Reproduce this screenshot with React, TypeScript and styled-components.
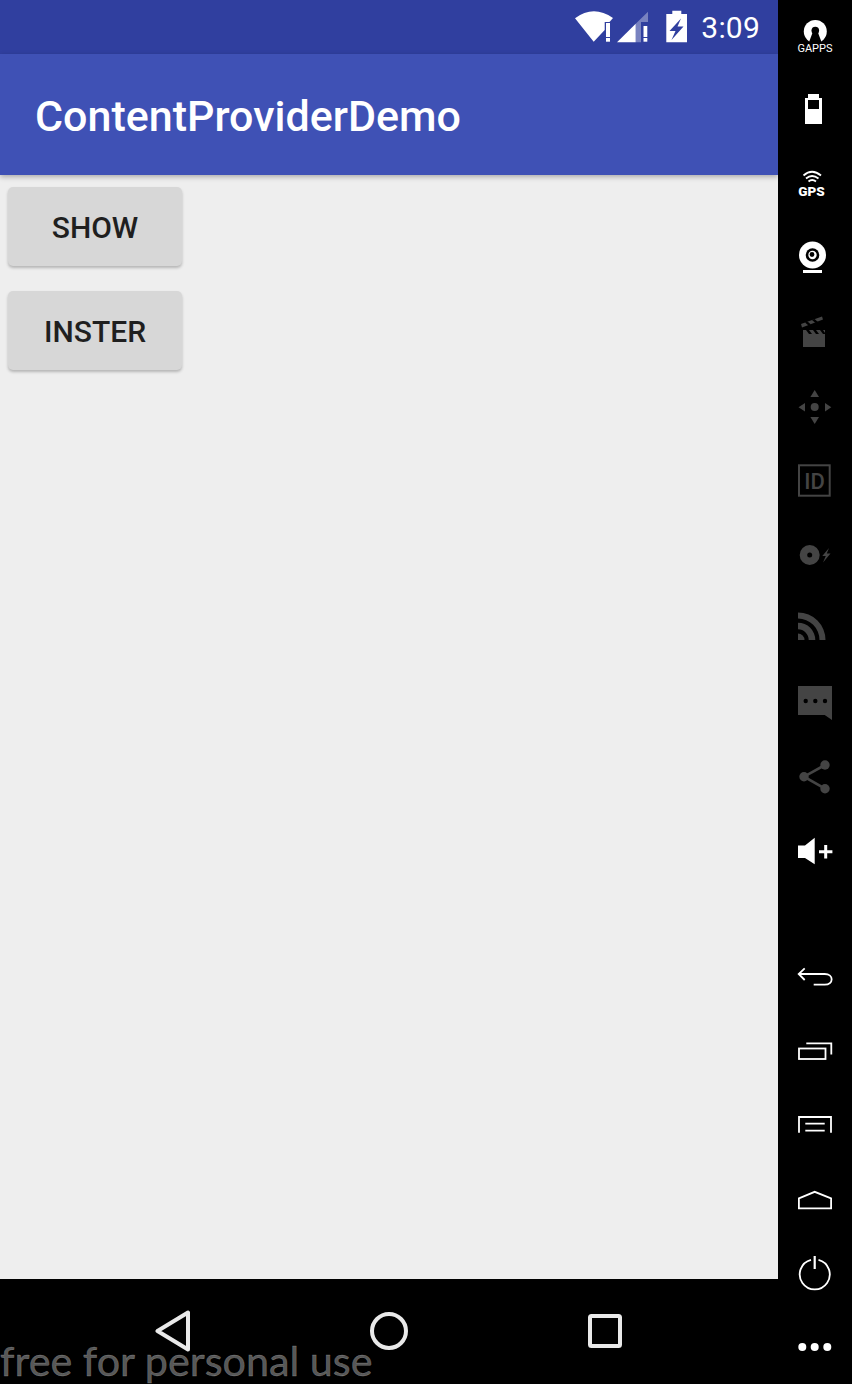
import React, { ReactNode } from 'react';
import styled, { createGlobalStyle } from 'styled-components';

const GlobalStyle = createGlobalStyle`
  html, body {
    margin: 0;
    padding: 0;
    background: #000;
  }
`;

const Screen = styled.div`
  position: relative;
  display: flex;
  width: 852px;
  height: 1384px;
  overflow: hidden;
  background: #000;
  font-family: Roboto, "Liberation Sans", sans-serif;
`;

const Device = styled.div`
  display: flex;
  flex-direction: column;
  width: 778px;
  height: 100%;
`;

const StatusBar = styled.div`
  display: flex;
  align-items: center;
  justify-content: flex-end;
  flex: 0 0 54px;
  padding-right: 18px;
  background: #303f9f;
  color: #fff;
`;

const StatusIcons = styled.svg`
  display: block;
  margin-right: 12px;
`;

const Clock = styled.span`
  padding-top: 1px;
  font-size: 30px;
  line-height: 53px;
  letter-spacing: 0.2px;
`;

const AppBar = styled.header`
  position: relative;
  z-index: 1;
  display: flex;
  align-items: center;
  flex: 0 0 121px;
  padding: 3px 0 0 35px;
  box-sizing: border-box;
  background: #3f51b5;
  box-shadow: 0 2px 5px rgba(0, 0, 0, 0.28);
`;

const Title = styled.h1`
  margin: 0;
  color: #fff;
  font-size: 43px;
  font-weight: 500;
`;

const Content = styled.main`
  display: flex;
  flex: 1;
  flex-direction: column;
  align-items: flex-start;
  gap: 25px;
  padding: 12px 8px;
  background: #eeeeee;
`;

const ActionButton = styled.button`
  width: 174px;
  height: 79px;
  padding: 2px 0 0;
  border: 0;
  border-radius: 5px;
  background: #d7d7d7;
  box-shadow: 0 2px 3px rgba(0, 0, 0, 0.24);
  color: #1f1f1f;
  font-family: inherit;
  font-size: 30px;
  font-weight: 500;
`;

const NavBar = styled.nav`
  display: grid;
  grid-template-columns: repeat(3, 216px);
  justify-items: center;
  align-items: center;
  flex: 0 0 105px;
  padding: 0 65px 2px;
  box-sizing: border-box;
  background: #000;
`;

const NavIcon = styled.svg`
  display: block;
  fill: none;
  stroke: #e9e9e9;
  stroke-width: 4;
  stroke-linejoin: round;
`;

const Rail = styled.aside`
  display: flex;
  flex-direction: column;
  justify-content: space-between;
  width: 74px;
  height: 100%;
`;

const RailGroup = styled.div`
  display: flex;
  flex-direction: column;
`;

const RailSvg = styled.svg<{ $tone: string }>`
  display: block;
  color: ${props => props.$tone};
  fill: currentColor;
`;

const RailLabel = styled.text<{ $bold?: boolean }>`
  fill: #fff;
  font-family: Roboto, "Liberation Sans", sans-serif;
  font-size: ${props => (props.$bold ? 13.5 : 11)}px;
  font-weight: ${props => (props.$bold ? 900 : 400)};
  text-anchor: middle;
`;

const IdLabel = styled.text`
  fill: #444;
  font-family: Roboto, "Liberation Sans", sans-serif;
  font-size: 22px;
  font-weight: 500;
  text-anchor: middle;
`;

const Watermark = styled.div`
  position: absolute;
  left: 0;
  bottom: 1px;
  color: rgba(255, 255, 255, 0.34);
  font-family: Lato, "Open Sans", sans-serif;
  font-size: 41.3px;
  line-height: 46px;
  white-space: nowrap;
  -webkit-text-stroke: 0.4px rgba(255, 255, 255, 0.34);
`;

const WHITE = '#ffffff';
const DIM = '#444444';

// top is the slot's y on the page, so the drawings below use page coordinates
const RailIcon: React.FC<{ top: number; tone?: string; children: ReactNode }> = ({ top, tone = WHITE, children }) => (
  <RailSvg $tone={tone} width={74} height={74} viewBox={`0 ${top} 74 74`}>
    {children}
  </RailSvg>
);

const Line = { fill: 'none', stroke: 'currentColor', strokeWidth: 1.8 };

const TopIcons = () => (
  <RailGroup>
    <RailIcon top={0}>
      <circle cx="37.3" cy="31.500" r="11.500" />
      <circle cx="37.3" cy="30.500" r="3.800" fill="#000" />
      <path d="M34.800 32 H39.800 L44 43.500 H30.500 Z" fill="#000" />
      <RailLabel x="37" y="52">GAPPS</RailLabel>
    </RailIcon>
    <RailIcon top={74}>
      <path d="M30 98 V94 H41 V98 H44 V124 H27 V98 Z" />
      <rect x="30" y="100" width="11" height="9" fill="#000" />
    </RailIcon>
    <RailIcon top={148}>
      <path d="M25.500 175.500 Q34 168 43 175.500 M28 178.500 Q34 173.500 40.500 178.500 M30.500 181.500 Q34 178.500 38 181.500" fill="none" stroke="currentColor" strokeWidth="1.800" />
      <RailLabel x="33.500" y="195.500" $bold>GPS</RailLabel>
    </RailIcon>
    <RailIcon top={222}>
      <circle cx="34.500" cy="255" r="13.500" />
      <circle cx="34.500" cy="255" r="6.800" fill="#000" />
      <circle cx="34.500" cy="255" r="4.200" />
      <circle cx="34" cy="254.500" r="2.400" fill="#000" />
      <rect x="25" y="270" width="19" height="3" />
    </RailIcon>
    <RailIcon top={296} tone={DIM}>
      <rect x="25" y="334" width="22" height="13" />
      <path d="M25 330 H47 V334 H25 Z" />
      <path d="M28 330 L31 334 H34 L31 330 Z M35 330 L38 334 H41 L38 330 Z M42 330 L45 334 H47 V333 L45 330 Z" fill="#000" />
      <path d="M23 324 L44 316.500 L45 319.500 L24 327.500 Z" />
      <path d="M27 322.500 L30.500 325.500 L33 324.500 L29.500 321.500 Z M34 320 L37.500 323 L40 322 L36.500 319 Z" fill="#000" />
    </RailIcon>
    <RailIcon top={370} tone={DIM}>
      <path d="M36.700 390 L41 397 H32.400 Z" />
      <circle cx="36.700" cy="407" r="4" />
      <path d="M20.500 407.300 L27 403 V411.500 Z" />
      <path d="M53.300 407.300 L47 403 V411.500 Z" />
      <path d="M32.400 417 H41 L36.700 424 Z" />
    </RailIcon>
    <RailIcon top={444} tone={DIM}>
      <rect x="21" y="465.300" width="30.700" height="30.400" fill="none" stroke="currentColor" strokeWidth="2" />
      <IdLabel x="36.500" y="488.500">ID</IdLabel>
    </RailIcon>
    <RailIcon top={518} tone={DIM}>
      <circle cx="31.700" cy="555" r="10" />
      <circle cx="31.700" cy="555" r="2.500" fill="#000" />
      <path d="M51 548 L44.300 556 H47.800 L45 562.500 L52.500 553.500 H48.800 Z" />
    </RailIcon>
    <RailIcon top={592} tone={DIM}>
      <path d="M20 612.500 A27.500 27.500 0 0 1 47.500 640 H41.500 A21.500 21.500 0 0 0 20 618.500 Z" />
      <path d="M20 622.700 A17.300 17.300 0 0 1 37.300 640 H30.700 A10.700 10.700 0 0 0 20 629.300 Z" />
      <path d="M20 633.500 A6.500 6.500 0 0 1 26.500 640 H20 Z" />
    </RailIcon>
    <RailIcon top={666} tone={DIM}>
      <path d="M20 686 H54 V720 L46.700 715 H20 Z" />
      <circle cx="27.700" cy="701" r="2.200" fill="#000" />
      <circle cx="37.300" cy="701" r="2.200" fill="#000" />
      <circle cx="47" cy="701" r="2.200" fill="#000" />
    </RailIcon>
    <RailIcon top={740} tone={DIM}>
      <path d="M47 765 L26 776.700 L47 788.700" fill="none" stroke="currentColor" strokeWidth="2.600" />
      <circle cx="26" cy="776.700" r="4.700" />
      <circle cx="47" cy="765" r="4.700" />
      <circle cx="47" cy="788.700" r="4.700" />
    </RailIcon>
    <RailIcon top={814}>
      <path d="M20 845.500 L27 845.500 L36.700 837.700 V864.300 L27 858 H20 Z" />
      <path d="M41 851.700 H54.400 M47.700 845 V858.400" fill="none" stroke="currentColor" strokeWidth="3" />
    </RailIcon>
  </RailGroup>
);

const BottomIcons = () => (
  <RailGroup>
    <RailIcon top={940}>
      <path d="M26.700 968.300 L20.700 974 L26.700 980 M20.700 974 H46.700 C56 974 56 984.700 46.700 984.700 H35.700" {...Line} />
    </RailIcon>
    <RailIcon top={1014}>
      <rect x="21" y="1048.500" width="26.500" height="10.500" {...Line} />
      <path d="M28.300 1043.300 H53.300 V1054.500" {...Line} />
    </RailIcon>
    <RailIcon top={1088}>
      <path d="M21 1132.700 V1117 H53 V1132.700" {...Line} />
      <path d="M27.300 1123.700 H46.700 M27.300 1130.700 H46.700" {...Line} />
    </RailIcon>
    <RailIcon top={1162}>
      <path d="M20.900 1208.300 H53.100 V1198.300 L36.700 1191.800 L20.900 1198.300 Z" {...Line} />
    </RailIcon>
    <RailIcon top={1236}>
      <path d="M33 1259.800 A15 15 0 1 0 40.500 1259.800" {...Line} />
      <path d="M36.700 1256 V1269" {...Line} strokeWidth="2.200" />
    </RailIcon>
    <RailIcon top={1310}>
      <circle cx="24.300" cy="1347" r="4" />
      <circle cx="36.700" cy="1347" r="4" />
      <circle cx="49.300" cy="1347" r="4" />
    </RailIcon>
  </RailGroup>
);

const App: React.FC = () => (
  <>
    <GlobalStyle />
    <Screen>
      <Device>
        <StatusBar>
          <StatusIcons width={114} height={54} viewBox="574 0 114 54" fill="#fff">
            <path d="M574 18.300 Q592.500 4.500 612 18 L608.500 22 H603.700 V30 L592.700 41.700 Z" />
            <rect x="605" y="23" width="4" height="14" />
            <rect x="605" y="38" width="4" height="3.700" />
            <path d="M616 42.300 L634.700 23.700 V42.300 Z" />
            <path d="M634.700 42.300 V23.700 L647 11.700 V22 H640 V42.300 Z" opacity="0.35" />
            <rect x="642.500" y="26" width="3.800" height="11" />
            <rect x="642.500" y="38" width="3.800" height="3.700" />
            <path d="M671.300 10.700 H680.300 V14 H686 V42.300 H665.300 V14 H671.300 Z" />
            <path d="M680 18.500 L668.500 31 H674.500 L670.500 40 L682.500 26.500 H676.500 Z" fill="#303f9f" />
          </StatusIcons>
          <Clock>3:09</Clock>
        </StatusBar>
        <AppBar>
          <Title>ContentProviderDemo</Title>
        </AppBar>
        <Content>
          <ActionButton>SHOW</ActionButton>
          <ActionButton>INSTER</ActionButton>
        </Content>
        <NavBar>
          <NavIcon width={36} height={42} viewBox="0 0 36 42">
            <path d="M2.500 21 L33 2.500 V39.500 Z" />
          </NavIcon>
          <NavIcon width={40} height={40} viewBox="0 0 40 40">
            <circle cx="20" cy="20" r="17" />
          </NavIcon>
          <NavIcon width={36} height={36} viewBox="0 0 36 36">
            <rect x="3" y="3" width="30" height="30" rx="1.500" />
          </NavIcon>
        </NavBar>
      </Device>
      <Rail>
        <TopIcons />
        <BottomIcons />
      </Rail>
      <Watermark>free for personal use</Watermark>
    </Screen>
  </>
);

export default App;
